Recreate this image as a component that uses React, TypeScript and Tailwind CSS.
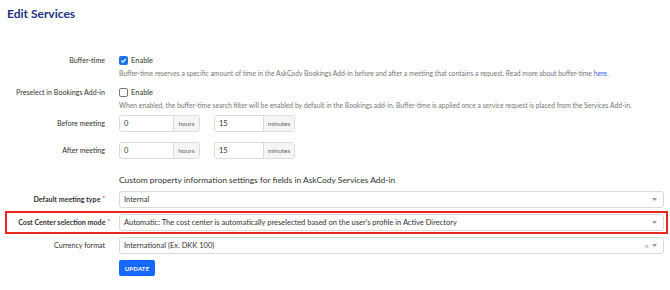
import React from "react";

const Caret = () => (
  <svg width="5" height="3" viewBox="0 0 5 3" className="shrink-0">
    <path d="M0 0 L5 0 L2.5 3 Z" fill="#9a9a9a" />
  </svg>
);

function Select({ value, clear }: { value: string; clear?: boolean }) {
  return (
    <div className="flex h-[17px] w-[545px] items-center rounded-[3px] border border-[#d9d9d9] bg-white pl-[4px] pr-[6px]">
      <span className="flex-1 truncate text-[7.5px] leading-none text-[#333]">{value}</span>
      {clear && <span className="mr-[3px] text-[8px] leading-none text-[#9a9a9a]">×</span>}
      <Caret />
    </div>
  );
}

function Addon({ value, unit, w1, w2 }: { value: string; unit: string; w1: string; w2: string }) {
  return (
    <div className="flex h-[17px] rounded-[3px] border border-[#dcdcdc] bg-white">
      <div className={`${w1} flex items-center pl-[4px] text-[7.5px] text-[#333]`}>{value}</div>
      <div className={`${w2} flex items-center justify-center border-l border-[#dcdcdc] bg-[#f5f5f5] text-[6.5px] text-[#666]`}>
        {unit}
      </div>
    </div>
  );
}

function Label({ children, bold, req }: { children: React.ReactNode; bold?: boolean; req?: boolean }) {
  return (
    <div className={`w-[106px] shrink-0 pr-[1px] text-right text-[7.1px] leading-none text-[#333] ${bold ? "font-bold" : ""}`}>
      {children}
      {req && <span className="relative -top-[2px] ml-[2px] text-[6px] text-[#e02424]">*</span>}
    </div>
  );
}

export default function App() {
  return (
    <div
      className="h-[290px] w-[670px] overflow-hidden bg-white"
      style={{ fontFamily: "Lato, 'Open Sans', sans-serif" }}
    >
      <h1 className="pl-[7px] pt-[6px] text-[12px] font-bold leading-[15px] text-[#1c3183]">Edit Services</h1>

      {/* Buffer-time */}
      <div className="mt-[35px] flex items-center">
        <Label>Buffer-time</Label>
        <div className="ml-[13px] flex items-center">
          <div className="flex h-[9px] w-[9px] items-center justify-center rounded-[2px] bg-[#1a73e8]">
            <svg width="7" height="7" viewBox="0 0 10 10">
              <path d="M2 5.2 L4.2 7.4 L8.2 2.6" stroke="white" strokeWidth="1.8" fill="none" />
            </svg>
          </div>
          <span className="ml-[3px] text-[7.5px] leading-none text-[#333]">Enable</span>
        </div>
      </div>
      <div className="ml-[119px] mt-[4px] text-[6.78px] leading-[8px] text-[#777]">
        Buffer-time reserves a specific amount of time in the AskCody Bookings Add-in before and after a meeting that contains a request. Read more about buffer-time{" "}
        <span className="text-[#2f5bff]">here.</span>
      </div>

      {/* Preselect */}
      <div className="mt-[11px] flex items-center">
        <Label>Preselect in Bookings Add-in</Label>
        <div className="ml-[13px] flex items-center">
          <div className="h-[9px] w-[9px] rounded-[2px] border border-[#777] bg-white" />
          <span className="ml-[3px] text-[7.5px] leading-none text-[#333]">Enable</span>
        </div>
      </div>
      <div className="ml-[119px] mt-[4px] text-[6.78px] leading-[8px] text-[#777]">
        When enabled, the buffer-time search filter will be enabled by default in the Bookings add-in. Buffer-time is applied once a service request is placed from the Services Add-in.
      </div>

      {/* Before meeting */}
      <div className="mt-[6px] flex items-center">
        <Label>Before meeting</Label>
        <div className="ml-[13px] flex gap-[14px]">
          <Addon value="0" unit="hours" w1="w-[53px]" w2="w-[26px]" />
          <Addon value="15" unit="minutes" w1="w-[48px]" w2="w-[31px]" />
        </div>
      </div>
      <div className="mt-[10px] flex items-center">
        <Label>After meeting</Label>
        <div className="ml-[13px] flex gap-[14px]">
          <Addon value="0" unit="hours" w1="w-[53px]" w2="w-[26px]" />
          <Addon value="15" unit="minutes" w1="w-[48px]" w2="w-[31px]" />
        </div>
      </div>

      <div className="ml-[119px] mt-[16px] text-[8.45px] leading-[10px] text-[#333]">
        Custom property information settings for fields in AskCody Services Add-in
      </div>

      <div className="mt-[6px] flex items-center">
        <Label bold req>Default meeting type</Label>
        <div className="ml-[13px]">
          <Select value="Internal" />
        </div>
      </div>

      <div className="ml-[5px] mt-[3px] flex h-[23px] w-[663px] items-center border-2 border-[#e8281e]">
        <div className="-ml-[2px] flex items-center">
          <Label bold req>Cost Center selection mode</Label>
          <div className="ml-[8px]">
            <Select value="Automatic: The cost center is automatically preselected based on the user's profile in Active Directory" />
          </div>
        </div>
      </div>

      <div className="mt-[3px] flex items-center">
        <Label>Currency format</Label>
        <div className="ml-[13px]">
          <Select value="International (Ex. DKK 100)" clear />
        </div>
      </div>

      <div className="ml-[119px] mt-[6px] flex h-[16px] w-[36px] items-center justify-center rounded-[2px] bg-[#1569ff] text-[6px] font-bold tracking-[0.2px] text-white">
        UPDATE
      </div>
    </div>
  );
}
